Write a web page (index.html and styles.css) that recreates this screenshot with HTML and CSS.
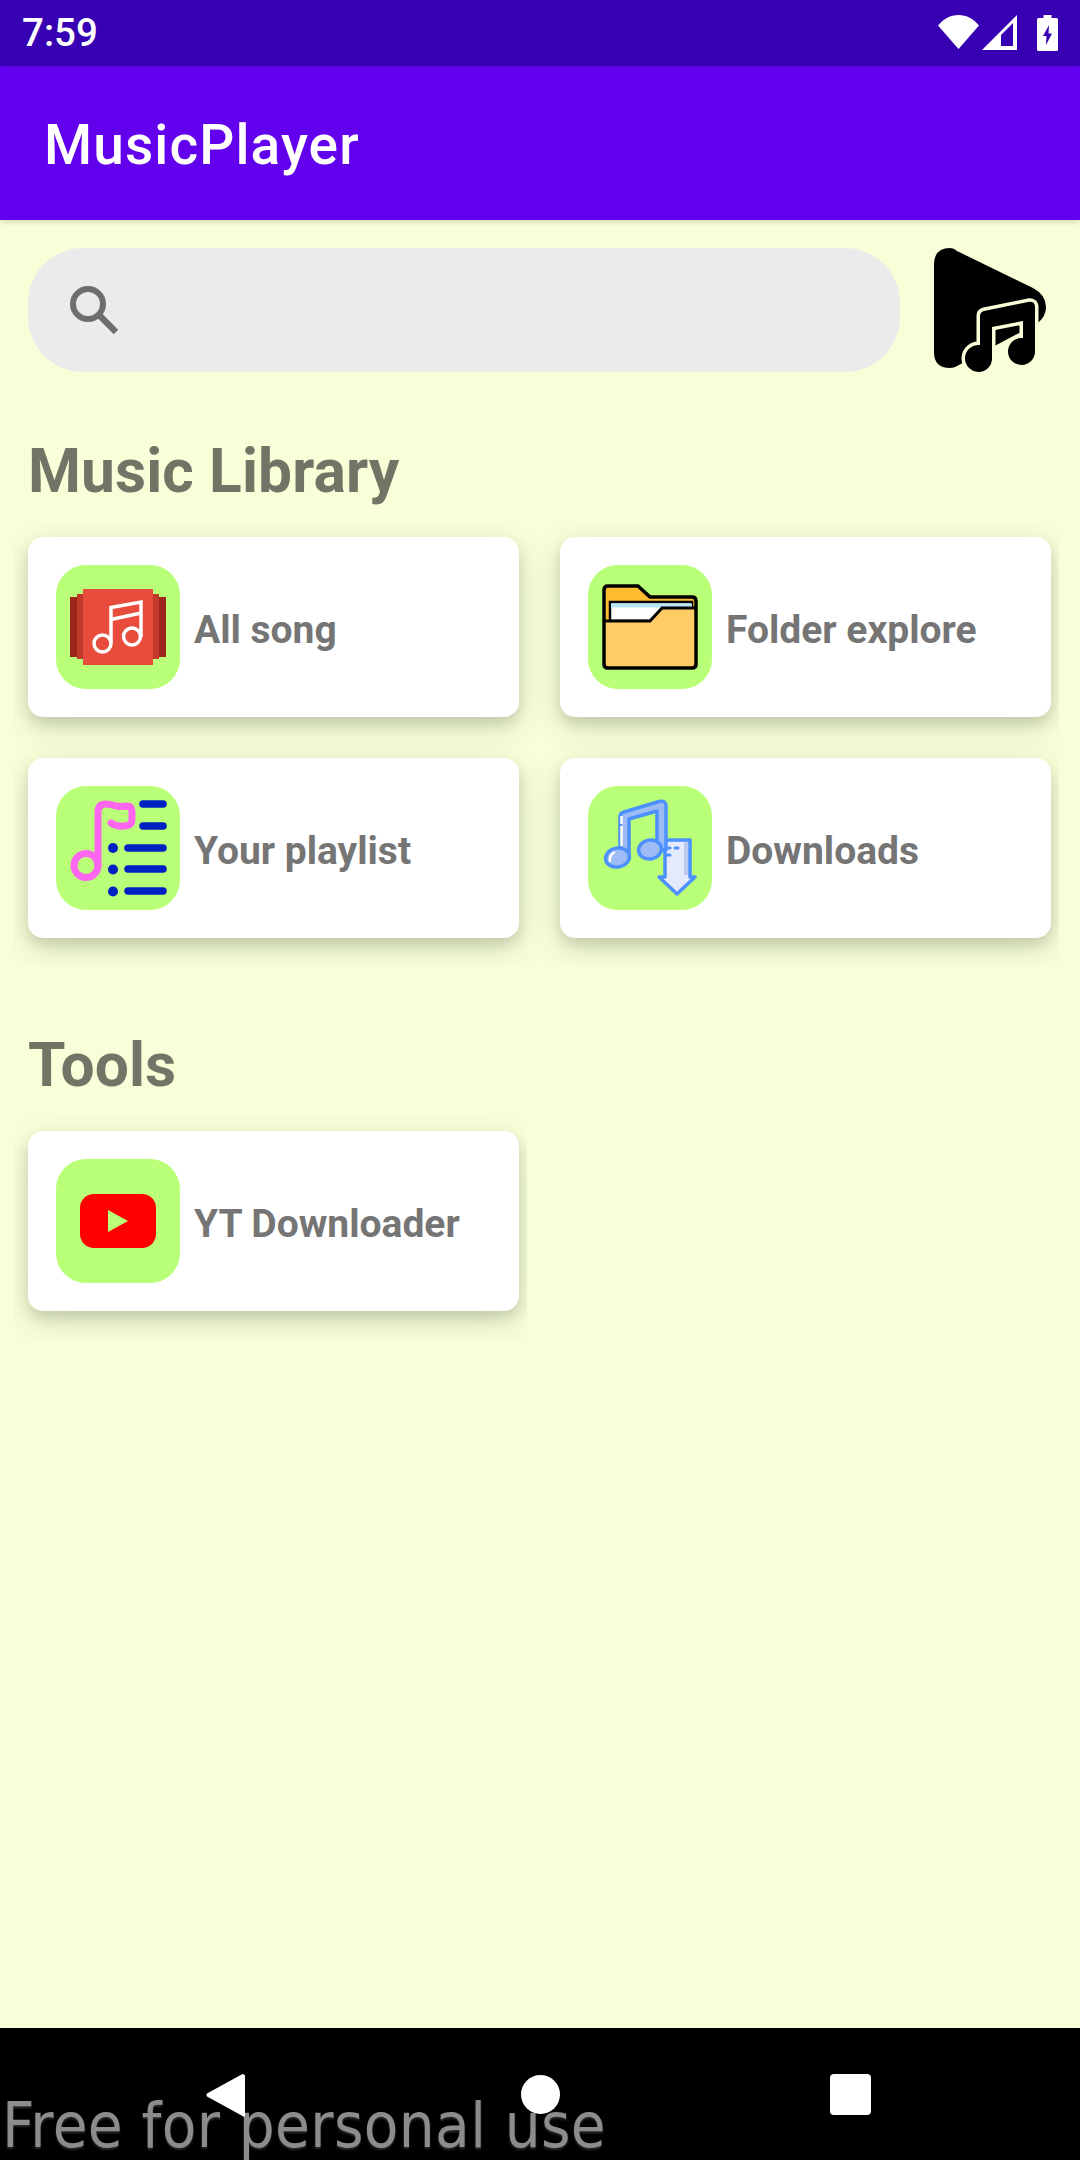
FILE: index.html
```html
<!DOCTYPE html>
<html lang="en">
<head>
<meta charset="utf-8">
<title>MusicPlayer</title>
<link rel="stylesheet" href="styles.css">
</head>
<body>
<div class="phone">
  <header class="statusbar">
    <span class="time">7:59</span>
    <div class="status-icons">
      <svg class="ic-wifi" viewBox="0 0 41 34"><path d="M0 10.500C5.500 4 12.500 0 20.500 0S35.500 4 41 10.500L20.500 34Z" fill="#fff"/></svg>
      <svg class="ic-signal" viewBox="0 0 35 35"><path fill-rule="evenodd" d="M35 0V35H0ZM31 8 19 20V31H31Z" fill="#fff"/></svg>
      <svg class="ic-battery" viewBox="0 0 21 36"><path fill-rule="evenodd" d="M6.500 0H14.500V3H19.500Q21 3 21 4.500V34.500Q21 36 19.500 36H1.500Q0 36 0 34.500V4.500Q0 3 1.500 3H6.500ZM12 10 6 21H9.500L9 30 15 18.500H11.500Z" fill="#fff"/></svg>
    </div>
  </header>
  <div class="appbar"><h1 class="apptitle">MusicPlayer</h1></div>
  <main class="content">
    <div class="searchrow">
      <div class="search">
        <svg class="ic-search" viewBox="0 0 48 48"><circle cx="18" cy="18" r="15" fill="none" stroke="#6e6e6e" stroke-width="6"/><path d="M29 29 46 46" stroke="#6e6e6e" stroke-width="6.500" fill="none"/></svg>
      </div>
      <svg class="logo" viewBox="0 0 112 124">
        <path d="M0 17Q0 0 16 0Q20 0 23 3L99 40Q112 47 112 59Q112 68 104 75L23 118Q20 120 16 120Q0 120 0 104Z" fill="#000"/>
        <path d="M46 68Q46 64 50 63L94 54Q101 53 101 59V103A13.500 13.500 0 1 1 87.500 90H89V73L58 79V110A13.500 13.500 0 1 1 46 97Z" fill="#000" stroke="#f6ffd7" stroke-width="7" paint-order="stroke"/>
      </svg>
    </div>

    <h2 class="heading">Music Library</h2>
    <div class="grid">
      <div class="card">
        <div class="tile">
          <svg class="art" viewBox="0 0 124 124">
            <rect x="14" y="32" width="96" height="60" fill="#9c261a"/>
            <rect x="21" y="29" width="82" height="65" fill="#c0392b"/>
            <rect x="27" y="24" width="70" height="76" fill="#e74c3c"/>
            <g fill="none" stroke="#fff" stroke-width="3.500">
              <circle cx="46.500" cy="78.500" r="8.500"/>
              <circle cx="76" cy="71.500" r="8.500"/>
              <path d="M55 78V42.500L85 37V72M55 54.500 85 48"/>
            </g>
          </svg>
        </div>
        <span class="label">All song</span>
      </div>
      <div class="card">
        <div class="tile">
          <svg class="art" viewBox="0 0 124 124">
            <path d="M16 25Q16 21 20 21H50L62 32H104Q108 32 108 36V99Q108 103 104 103H20Q16 103 16 99Z" fill="#ffbc2e"/>
            <rect x="22" y="37" width="82" height="19" fill="#fff" stroke="#000" stroke-width="2.500"/>
            <rect x="23" y="38.500" width="81" height="4" fill="#b6e5f7"/>
            <path d="M16 56H62L74 43H104Q108 43 108 47V99Q108 103 104 103H20Q16 103 16 99Z" fill="#ffcc66"/>
            <path d="M16 56H62L74 43H107" fill="none" stroke="#000" stroke-width="3"/>
            <path d="M16 25Q16 21 20 21H50L62 32H104Q108 32 108 36V99Q108 103 104 103H20Q16 103 16 99Z" fill="none" stroke="#000" stroke-width="3.500"/>
          </svg>
        </div>
        <span class="label">Folder explore</span>
      </div>
      <div class="card">
        <div class="tile">
          <svg class="art" viewBox="0 0 124 124">
            <g fill="none" stroke="#ff66f0" stroke-width="7" stroke-linecap="round" stroke-linejoin="round">
              <circle cx="30" cy="79.500" r="12"/>
              <path d="M42 79V26Q42 18 50 18Q54 18 60 20Q67 21 71 20Q76 20 76 26V33Q76 40 68 40Q61 41 55 37"/>
            </g>
            <g fill="none" stroke="#0021c2" stroke-width="7.500" stroke-linecap="round">
              <path d="M87 18H107M87 40H107M72 62H107M72 83H107M72 105H107"/>
            </g>
            <g fill="#0021c2">
              <circle cx="57" cy="62" r="5"/>
              <circle cx="57" cy="83.500" r="5"/>
              <circle cx="57" cy="105.500" r="5"/>
            </g>
          </svg>
        </div>
        <span class="label">Your playlist</span>
      </div>
      <div class="card">
        <div class="tile">
          <svg class="art" viewBox="0 0 124 124">
            <path d="M77 54H102V91H107L89 108 71 91H77Z" fill="#e4e9fb" stroke="#4d90ff" stroke-width="3.500" stroke-linejoin="round"/>
            <path d="M96 56H100V89H96Z" fill="#bcc9ee"/>
            <path d="M80 62H82M87 62H90M78 69H82" stroke="#4d90ff" stroke-width="3" stroke-linecap="round" fill="none"/>
            <path d="M32 72V31Q32 27 36 26L71 15.500Q78 14 78 20V64H69V25L41 33V72Z" fill="#9dbcf5" stroke="#4d90ff" stroke-width="3.500" stroke-linejoin="round"/>
            <ellipse cx="29.500" cy="71.500" rx="12" ry="9.500" transform="rotate(-10 29.500 71.500)" fill="#9dbcf5" stroke="#4d90ff" stroke-width="3.500"/>
            <ellipse cx="62" cy="63.500" rx="11.500" ry="9.500" transform="rotate(-10 62 63.500)" fill="#9dbcf5" stroke="#4d90ff" stroke-width="3.500"/>
            <path d="M22 76Q21 69 27 66" fill="none" stroke="#fff" stroke-width="2.500"/>
            <path d="M33.500 30V60" fill="none" stroke="#fff" stroke-width="2.500" stroke-dasharray="8 2 20"/>
          </svg>
        </div>
        <span class="label">Downloads</span>
      </div>
    </div>

    <h2 class="heading">Tools</h2>
    <div class="grid grid-single">
      <div class="card">
        <div class="tile">
          <svg class="art" viewBox="0 0 124 124">
            <rect x="24" y="35" width="76" height="54" rx="14" fill="#f00"/>
            <path d="M52 51 72 62 52 73Z" fill="#b9ff77"/>
          </svg>
        </div>
        <span class="label">YT Downloader</span>
      </div>
    </div>
  </main>
  <footer class="navbar">
    <svg class="nav-back" viewBox="0 0 39 44"><path d="M38 1.500A1.500 1.500 0 0 1 39 3V41A1.500 1.500 0 0 1 36.500 43L1 23.500Q0 22 1 20.500L36.500 1Z" fill="#fff"/></svg>
    <span class="nav-home"></span>
    <span class="nav-recent"></span>
    <span class="watermark">Free for personal use</span>
  </footer>
</div>
</body>
</html>
```

FILE: styles.css
```css
html, body { margin: 0; padding: 0; }
body { font-family: Roboto, "Liberation Sans", sans-serif; background: #f6ffd7; }

.phone { width: 1080px; height: 2160px; display: flex; flex-direction: column; overflow: hidden; }

.statusbar { height: 66px; flex: none; background: #3700b3; display: flex; align-items: center; justify-content: space-between; box-sizing: border-box; padding: 0 22px 0 22px; }
.time { color: #fff; font-size: 38.5px; font-weight: 500; line-height: 66px; }
.status-icons { display: flex; align-items: flex-start; padding-bottom: 1px; }
.ic-wifi { width: 41px; height: 34px; display: block; }
.ic-signal { width: 35px; height: 35px; margin-left: 3px; display: block; }
.ic-battery { width: 21px; height: 36px; margin-left: 20px; display: block; }

.appbar { height: 154px; flex: none; background: #6200ee; display: flex; align-items: center; padding-left: 44px; box-shadow: 0 2px 6px rgba(0,0,0,.14); position: relative; }
.apptitle { margin: 0; padding-top: 3px; color: #fff; font-size: 55px; font-weight: 500; line-height: 64px; letter-spacing: 1.1px; }

.content { flex: 1; min-height: 0; background: #f6ffd7; }
.searchrow { display: flex; align-items: flex-start; padding: 28px 0 0 28px; }
.search { width: 872px; height: 124px; background: #ebebeb; border-radius: 55px; display: flex; align-items: center; padding-left: 42px; box-sizing: border-box; }
.ic-search { width: 48px; height: 48px; display: block; }
.logo { width: 112px; height: 124px; margin-left: 34px; flex: none; display: block; }

.heading { margin: 0; padding: 64px 0 15px 28px; font-size: 60.5px; font-weight: 700; line-height: 72px; letter-spacing: .1px; color: #727565; }

.grid { display: grid; grid-template-columns: 491px 491px; column-gap: 41px; row-gap: 41px; width: max-content; padding: 14px 8px 28px 14px; margin-left: 14px; overflow: hidden; }
.grid-single { grid-template-columns: 491px; }

.card { height: 180px; background: #fff; border-radius: 15px; box-shadow: 0 7px 14px rgba(0,0,0,.13), 0 10px 34px rgba(0,0,0,.12); display: flex; align-items: center; padding-left: 28px; box-sizing: border-box; }
.tile { width: 124px; height: 124px; flex: none; background: #b9ff77; border-radius: 30px; }
.art { width: 124px; height: 124px; display: block; }
.label { margin-left: 14px; font-size: 39px; font-weight: 700; color: #757575; line-height: 46px; padding-top: 6px; }

.navbar { height: 132px; flex: none; background: #000; position: relative; display: flex; align-items: flex-start; padding: 45px 0 0 206px; box-sizing: border-box; }
.nav-back { width: 39px; height: 44px; display: block; flex: none; position: relative; z-index: 1; }
.nav-home { width: 39px; height: 39px; margin: 2px 0 0 276px; border-radius: 50%; background: #fff; flex: none; position: relative; z-index: 1; }
.nav-recent { width: 41px; height: 41px; margin: 1px 0 0 270px; border-radius: 4px; background: #fff; flex: none; position: relative; z-index: 1; }
.watermark { position: absolute; left: 2px; top: 61px; font-family: "DejaVu Sans Condensed", "DejaVu Sans", sans-serif; font-stretch: condensed; font-size: 63px; line-height: 74px; letter-spacing: .35px; color: #8c8c8c; white-space: nowrap; text-shadow: 0 2px 2px rgba(140,140,140,.3); }
```
